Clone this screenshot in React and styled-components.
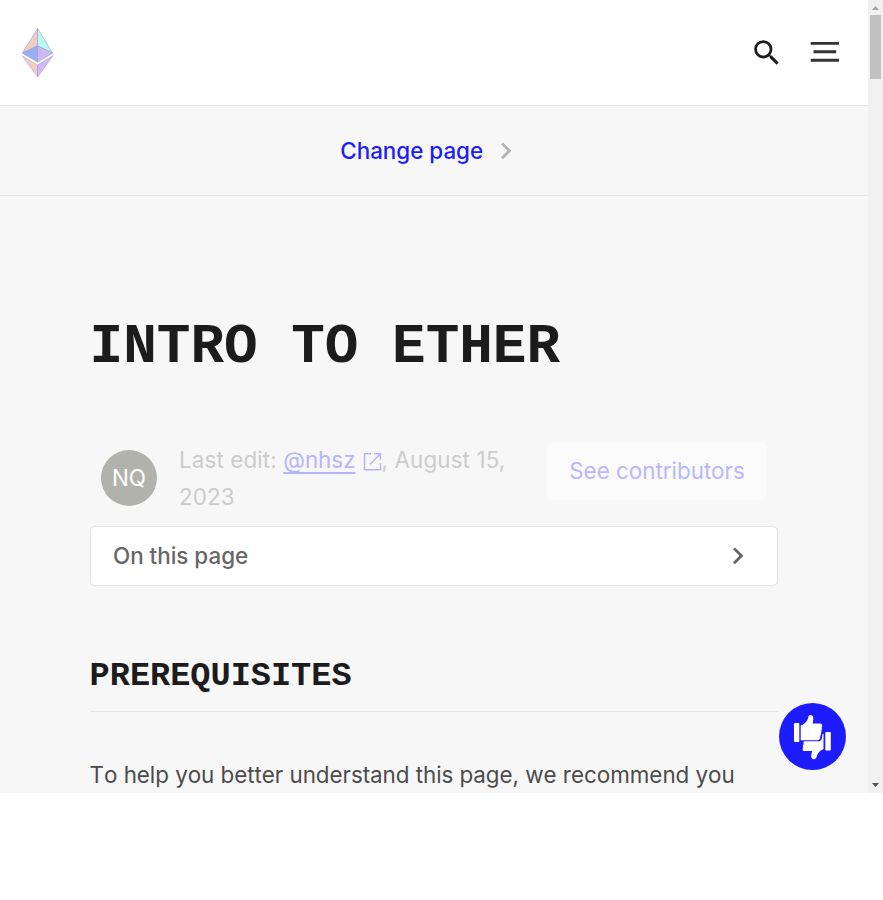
import React from "react";
import styled, { createGlobalStyle } from "styled-components";
import { MdSearch, MdChevronRight } from "react-icons/md";

const GlobalStyle = createGlobalStyle`
  *, *::before, *::after { box-sizing: border-box; }
  body { margin: 0; background: #fff; font-family: Inter, sans-serif; font-size: 22.4px; line-height: 37px; }
`;

const Viewport = styled.div`
  display: flex;
  height: 793px;
  overflow: hidden;
`;

const Page = styled.div`
  position: relative;
  flex: 1;
  min-width: 0;
  overflow: hidden;
  background: #f7f7f7;
`;

const Header = styled.header`
  display: flex;
  align-items: center;
  justify-content: space-between;
  height: 106px;
  padding: 0 28px 0 21px;
  background: #fff;
  border-bottom: 1px solid #e5e5e5;
`;

const Actions = styled.div`
  display: flex;
  align-items: center;
  gap: 26px;
  color: #1c1c1c;
`;

const Icon = styled.svg`
  display: block;
  flex: none;
`;

const SubNav = styled.nav`
  display: flex;
  align-items: center;
  justify-content: center;
  gap: 6px;
  height: 90px;
  padding-right: 5px;
  border-bottom: 1px solid #e5e5e5;
  color: #b2b2b2;
`;

const SubNavLink = styled.a`
  color: #1c1cff;
  font-weight: 500;
`;

const Article = styled.main`
  padding: 112px 89.6px 0;
`;

const Title = styled.h1`
  margin: 0;
  font: 700 56px/78px "Liberation Mono", monospace;
  color: #1c1c1c;
  text-transform: uppercase;
`;

const Meta = styled.div`
  display: flex;
  align-items: flex-start;
  height: 84px;
  margin-top: 56px;
  padding: 0 11.4px;
`;

const Avatar = styled.div`
  width: 56px;
  height: 56px;
  margin: 8px 22px 0 0;
  border-radius: 50%;
  background: #b2b2ad;
  color: #fff;
  line-height: 55px;
  text-align: center;
`;

const Edit = styled.p`
  width: 346px;
  margin: -1px 0 0;
  color: #ccc;
  letter-spacing: 0.12px;
`;

const EditLink = styled.a`
  color: #b5b5f9;
  letter-spacing: 0;
  text-decoration: underline;
  text-decoration-thickness: 2px;
  text-underline-offset: 4px;
  text-decoration-skip-ink: none;
`;

const LinkIcon = styled.svg`
  display: inline-block;
  margin-left: 7px;
  vertical-align: -3px;
  color: #b5b5f9;
`;

const Contributors = styled.button`
  width: 220px;
  height: 58px;
  margin-left: 22px;
  padding: 0 0 2px;
  border: 0;
  border-radius: 6px;
  background: #fafafa;
  color: #b8b8fb;
  font: inherit;
`;

const Contents = styled.button`
  display: flex;
  align-items: center;
  justify-content: space-between;
  width: 100%;
  height: 60px;
  padding: 0 22.4px;
  border: 1px solid #e5e5e5;
  border-radius: 5px;
  background: #fff;
  color: #666;
  font: inherit;
  font-weight: 500;
`;

const ContentsLabel = styled.span`
  padding-bottom: 2px;
`;

const SectionTitle = styled.h2`
  margin: 65px 0 0;
  padding-bottom: 10px;
  border-bottom: 1px solid #e5e5e5;
  font: 700 33.6px/50px "Liberation Mono", monospace;
  color: #1c1c1c;
  text-transform: uppercase;
`;

const Paragraph = styled.p`
  margin: 44px 0 0;
  color: #4c4c4c;
  font-kerning: none;
  font-feature-settings: "calt" 0, "liga" 0;
  letter-spacing: -0.04px;
`;

const Feedback = styled.button`
  position: absolute;
  right: 22px;
  bottom: 23px;
  width: 67px;
  height: 67px;
  padding: 0;
  border: 0;
  border-radius: 50%;
  background: #1c1cff;
`;

const ScrollTrack = styled.div`
  display: flex;
  flex-direction: column;
  align-items: center;
  width: 15px;
  background: #f0f0f0;
`;

const ScrollThumb = styled.div`
  width: 11px;
  height: 64px;
  margin-bottom: auto;
  background: #c1c1c1;
`;

const EthLogo = () => (
  <Icon width="33" height="50" viewBox="0 0 33 50" stroke="#9d93d8" strokeWidth="0.6" strokeLinejoin="round">
    <path d="M16.5 .5 1.300 25l15.200-7z" fill="#f0cdc2" />
    <path d="M16.5.5 31.700 25l-15.200-7z" fill="#b8faf6" />
    <path d="M16.5 18 1.300 25l15.200 9z" fill="#94b2f3" />
    <path d="M16.5 18l15.200 7-15.200 9z" fill="#cdbaf4" />
    <path d="M1.300 28l15.200 9v12z" fill="#f0cdc2" stroke="#b7a6d8" />
    <path d="M31.700 28l-15.200 9v12z" fill="#cdbaf4" />
  </Icon>
);

const MenuIcon = () => (
  <Icon width="30" height="24" viewBox="0 0 30 24" stroke="#333" strokeWidth="2.900">
    <path d="M.7 2.400h28.300M3.500 10.800h22.700M.7 19.300h28.300" />
  </Icon>
);

const ThumbsIcon = () => (
  <Icon width="67" height="67" viewBox="0 0 67 67" fill="#fff">
    <rect x="15" y="20" width="5.300" height="19" rx=".8" />
    <path d="M21.700 22.500c4-1.300 6.800-4.600 7.500-8 .3-1.700 1-2.500 2.400-2.500 2.100 0 3 1.700 2.700 4.400l-.7 4h7.400c1.600 0 2.400 1 2.200 2.400 0 1-.5 1.500-.5 2 .4.700.3 1.500-.3 2.600.2 1 .1 1.700-.5 2.600.2.900 0 1.700-.5 2.400l-.5 2.900c-.3 1.300-1 2-2.400 2H21.700z" />
    <rect x="46.300" y="29" width="5.500" height="18.600" rx=".8" />
    <path d="M24.700 38.300h14.200c2.500 0 3.600-1.300 4-3.400l.6-4h1V46c-4 1.500-6 4.500-6.800 7.600-.5 1.800-1.300 2.700-2.800 2.700-2 0-3-1.700-2.600-4.200l.8-4h-7.400c-1.600 0-2.300-1.100-2-2.400l.5-1.700c-.5-.8-.3-1.700.3-2.400z" />
  </Icon>
);

const ExternalIcon = () => (
  <LinkIcon width="19" height="19" viewBox="0 0 19 19" fill="none" stroke="currentColor" strokeWidth="1.500">
    <path d="M8 1.800H1.500v16h16V11M11 1.800h6.500v6M17.500 1.800 7 12.300" />
  </LinkIcon>
);

export default function App() {
  return (
    <>
      <GlobalStyle />
      <Viewport>
        <Page>
          <Header>
            <EthLogo />
            <Actions>
              <MdSearch size={33.6} />
              <MenuIcon />
            </Actions>
          </Header>
          <SubNav>
            <SubNavLink>Change page</SubNavLink>
            <MdChevronRight size={33.6} />
          </SubNav>
          <Article>
            <Title>Intro to ether</Title>
            <Meta>
              <Avatar>NQ</Avatar>
              <Edit>
                Last edit: <EditLink>@nhsz</EditLink>
                <ExternalIcon />, August 15, 2023
              </Edit>
              <Contributors>See contributors</Contributors>
            </Meta>
            <Contents>
              <ContentsLabel>On this page</ContentsLabel>
              <MdChevronRight size={33.6} />
            </Contents>
            <SectionTitle>Prerequisites</SectionTitle>
            <Paragraph>To help you better understand this page, we recommend you</Paragraph>
          </Article>
          <Feedback aria-label="Feedback">
            <ThumbsIcon />
          </Feedback>
        </Page>
        <ScrollTrack>
          <Icon width="15" height="15" viewBox="0 0 15 15" fill="#a3a3a3">
            <path d="M4 10h7L7.500 6z" />
          </Icon>
          <ScrollThumb />
          <Icon width="15" height="15" viewBox="0 0 15 15" fill="#505050">
            <path d="M4 5h7L7.500 9z" />
          </Icon>
        </ScrollTrack>
      </Viewport>
    </>
  );
}
